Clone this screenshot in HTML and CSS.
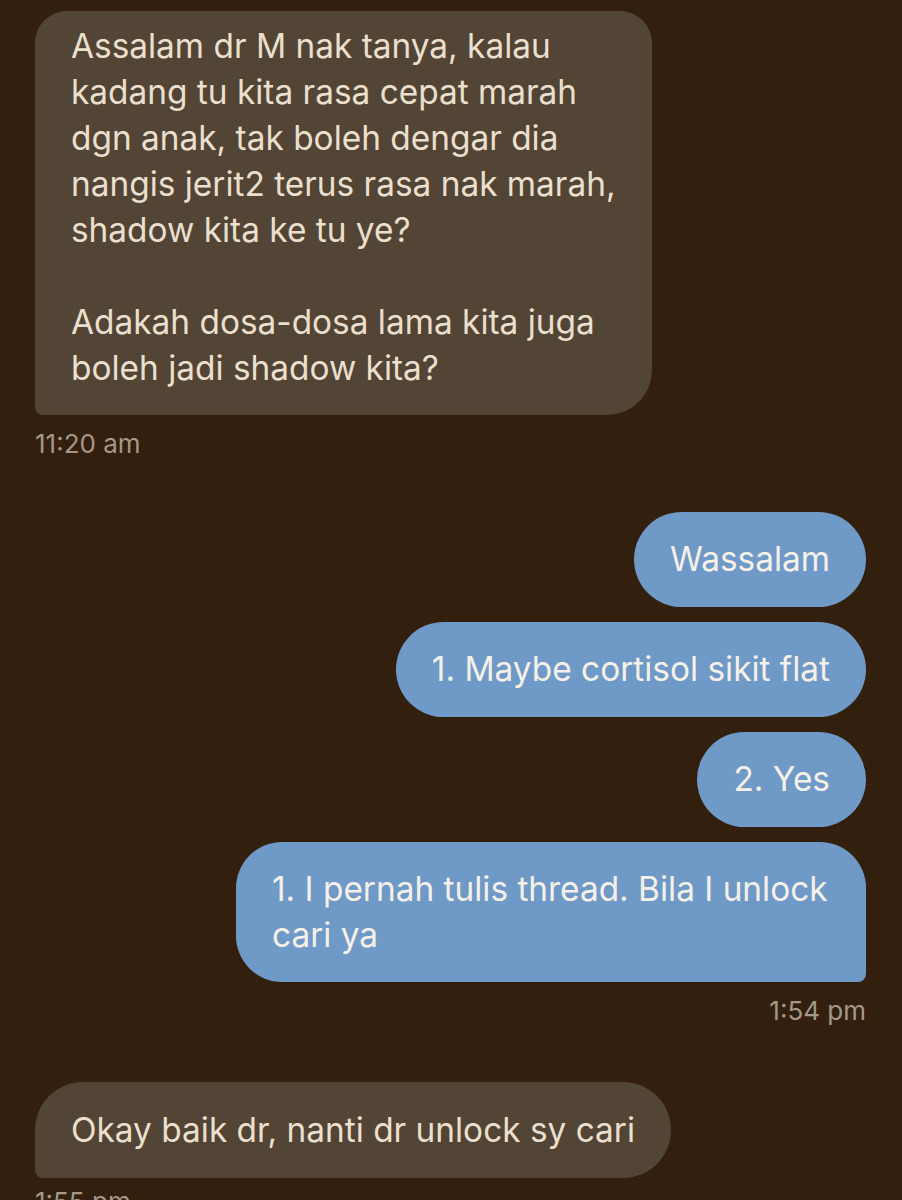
FILE: index.html
```html
<!DOCTYPE html>
<html lang="ms">
<head>
<meta charset="utf-8">
<title>Chat</title>
<link rel="stylesheet" href="styles.css">
</head>
<body>
<main class="chat">
  <section class="group in first">
    <div class="bubble in-first">Assalam dr M nak tanya, kalau<br>kadang tu kita rasa cepat marah<br>dgn anak, tak boleh dengar dia<br>nangis jerit2 terus rasa nak marah,<br>shadow kita ke tu ye?<br><br>Adakah dosa-dosa lama kita juga<br>boleh jadi shadow kita?</div>
    <div class="time t1">11:20 am</div>
  </section>

  <section class="group out">
    <div class="bubble out-b pill">Wassalam</div>
    <div class="bubble out-b pill">1. Maybe cortisol sikit flat</div>
    <div class="bubble out-b pill">2. Yes</div>
    <div class="bubble out-b last">1. I pernah tulis thread. Bila I unlock<br>cari ya</div>
    <div class="time t2">1:54 pm</div>
  </section>

  <section class="group in second">
    <div class="bubble in-b">Okay baik dr, nanti dr unlock sy cari</div>
    <div class="time t3">1:55 pm</div>
  </section>
</main>
</body>
</html>
```

FILE: styles.css
```css
html, body {
  margin: 0;
  padding: 0;
  background: #321f0e;
}

body {
  width: 902px;
  height: 1200px;
  overflow: hidden;
  font-family: Inter, "Liberation Sans", sans-serif;
}

.chat {
  display: flex;
  flex-direction: column;
  padding: 11px 36px 0 35px;
}

.group {
  display: flex;
  flex-direction: column;
}

.group.in {
  align-items: flex-start;
}

.group.out {
  align-items: flex-end;
  gap: 15px;
  margin-top: 53px;
}

.group.second {
  margin-top: 56px;
}

.bubble {
  box-sizing: border-box;
  font-size: 33.4px;
  line-height: 46px;
  padding: 25px 36px;
  width: fit-content;
}

.in-first {
  background: #524536;
  color: #ebdfcd;
  width: 617px;
  padding: 12px 36px 24px;
  border-radius: 32px 32px 45px 8px;
}

.in-b {
  background: #524536;
  color: #ebdfcd;
  border-radius: 48px 48px 48px 8px;
}

.out-b {
  background: #6f99c6;
  color: #f5f0e8;
}

.pill {
  border-radius: 48px;
  height: 95px;
  padding-top: 24px;
  padding-bottom: 25px;
}

.last {
  width: 630px;
  border-radius: 46px 46px 8px 46px;
  padding: 24px 36px;
}

.time {
  font-size: 26px;
  line-height: 30px;
  color: #a59886;
}

.t1 {
  margin-top: 14px;
}

.t2 {
  margin-top: -1px;
}

.t3 {
  margin-top: 9px;
}
```
